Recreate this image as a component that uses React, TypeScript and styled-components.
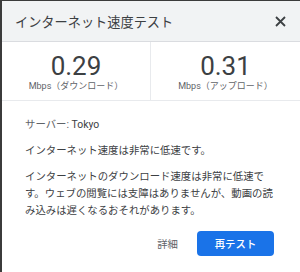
import React from 'react'
import styled, { createGlobalStyle } from 'styled-components'

const GlobalStyle = createGlobalStyle`
	html, body {
		margin: 0;
		padding: 0;
		background: #3b3b3b;
		overflow: hidden;
	}
	body {
		font-family: Roboto, 'Noto Sans CJK JP', sans-serif;
	}
`

const Dialog = styled.div`
	margin: 1px 0 0 2px;
	width: 298px;
	height: 271px;
	background: #ffffff;
	display: flex;
	flex-direction: column;
	color: #3c4043;
`

const Header = styled.div`
	height: 41px;
	box-sizing: border-box;
	padding: 1px 14px 0 13px;
	background: #f1f3f4;
	border-bottom: 1px solid #dadce0;
	display: flex;
	align-items: center;
	justify-content: space-between;
`

const Title = styled.h1`
	margin: 0;
	font-size: 13.2px;
	font-weight: 400;
	color: #3c4043;
`

const CloseButton = styled.button`
	border: none;
	background: none;
	padding: 0;
	width: 11px;
	height: 11px;
	display: flex;
	color: #3c4043;
	cursor: pointer;
`

const SpeedRow = styled.div`
	display: grid;
	grid-template-columns: 1fr 1fr;
	height: 58px;
	border-bottom: 1px solid #e8eaed;
`

const Speed = styled.div<{ $divider?: boolean }>`
	display: flex;
	flex-direction: column;
	align-items: center;
	padding-top: 10px;
	border-right: ${(p) => (p.$divider ? '1px solid #e8eaed' : 'none')};
`

const SpeedValue = styled.div`
	font-size: 26px;
	line-height: 29px;
	color: #3c4043;
`

const SpeedUnit = styled.div`
	font-size: 9px;
	line-height: 10px;
	color: #5f6368;
`

const Body = styled.div`
	padding: 15px 23px 0;
	font-size: 10.4px;
	line-height: 17px;
`

const Para = styled.p`
	margin: 0 0 9px;
	color: #3c4043;
`

const Label = styled.span`
	color: #5f6368;
`

const Actions = styled.div`
	display: flex;
	justify-content: flex-end;
	align-items: center;
	gap: 9px;
	padding: 3px 26px 0 0;
`

const Button = styled.button<{ $primary?: boolean }>`
	height: 25px;
	min-width: ${(p) => (p.$primary ? '77px' : '40px')};
	padding: 0 10px;
	border: none;
	border-radius: 4px;
	font-family: Roboto, 'Noto Sans CJK JP', sans-serif;
	font-size: 10.4px;
	font-weight: ${(p) => (p.$primary ? 500 : 400)};
	background: ${(p) => (p.$primary ? '#1a73e8' : 'transparent')};
	color: ${(p) => (p.$primary ? '#ffffff' : '#5f6368')};
	cursor: pointer;
`

function App() {
	return (
		<>
			<GlobalStyle />
			<Dialog>
				<Header>
					<Title>インターネット速度テスト</Title>
					<CloseButton aria-label="閉じる">
						<svg width="11" height="11" viewBox="0 0 11 11">
							<path d="M1 1 L10 10 M10 1 L1 10" stroke="currentColor" strokeWidth="1.8" />
						</svg>
					</CloseButton>
				</Header>
				<SpeedRow>
					<Speed $divider>
						<SpeedValue>0.29</SpeedValue>
						<SpeedUnit>Mbps（ダウンロード）</SpeedUnit>
					</Speed>
					<Speed>
						<SpeedValue>0.31</SpeedValue>
						<SpeedUnit>Mbps（アップロード）</SpeedUnit>
					</Speed>
				</SpeedRow>
				<Body>
					<Para>
						<Label>サーバー: </Label>Tokyo
					</Para>
					<Para>インターネット速度は非常に低速です。</Para>
					<Para>
						インターネットのダウンロード速度は非常に低速です。ウェブの閲覧には支障はありませんが、動画の読み込みは遅くなるおそれがあります。
					</Para>
				</Body>
				<Actions>
					<Button>詳細</Button>
					<Button $primary>再テスト</Button>
				</Actions>
			</Dialog>
		</>
	)
}

export default App
